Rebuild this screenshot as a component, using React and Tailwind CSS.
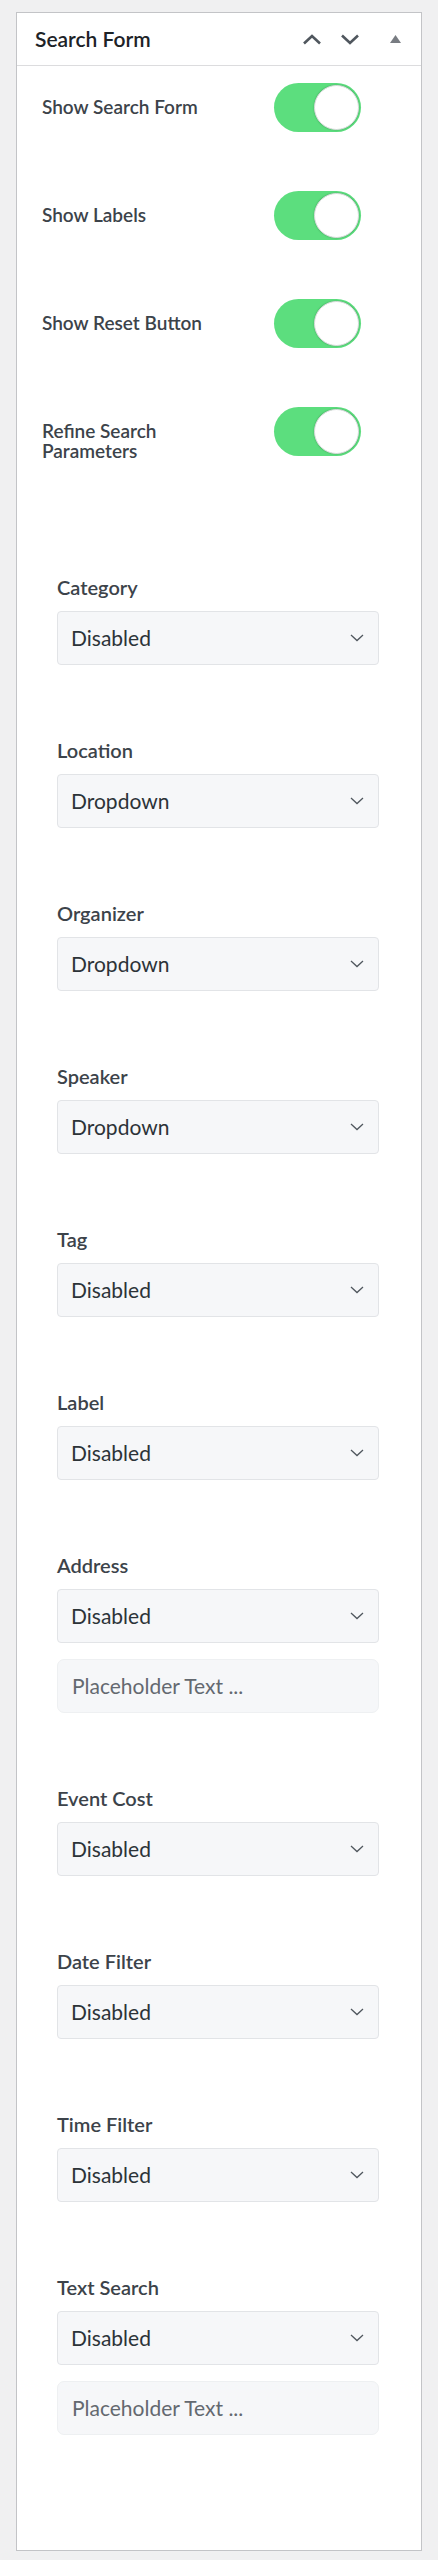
import React from 'react';

const font = { fontFamily: 'Lato, "Open Sans", "Liberation Sans", sans-serif' };

function Toggle() {
  return (
    <div className="relative w-[87px] h-[49px] rounded-full bg-[#5cde7e] shrink-0">
      <div className="absolute right-[2px] top-[2px] w-[45px] h-[45px] rounded-full bg-white border border-[#d9dcdc] shadow-[0_0_2px_rgba(0,0,0,0.25)]" />
    </div>
  );
}

function Chevron() {
  return (
    <svg width="14" height="8" viewBox="0 0 14 8" className="shrink-0">
      <path d="M1 1l6 5.5L13 1" fill="none" stroke="#50575e" strokeWidth="1.3" />
    </svg>
  );
}

function Field({ label, value, placeholder }) {
  return (
    <div className="flex flex-col">
      <div className="text-[20px] leading-[24px] font-semibold text-[#3c434a]">{label}</div>
      <div className="mt-[12px] h-[54px] w-[322px] flex items-center justify-between pl-[13px] pr-[14px] bg-[#f6f7f9] border border-[#e2e4e7] rounded-[4px]">
        <span className="text-[21px] text-[#2c3338]">{value}</span>
        <Chevron />
      </div>
      {placeholder && (
        <div className="mt-[16px] h-[54px] w-[322px] flex items-center pl-[14px] bg-[#f6f7f9] border border-[#eef0f2] rounded-[7px]">
          <span className="text-[21px] text-[#646970]">{placeholder}</span>
        </div>
      )}
    </div>
  );
}

const toggles = ['Show Search Form', 'Show Labels', 'Show Reset Button', 'Refine Search Parameters'];

const fields = [
  { label: 'Category', value: 'Disabled' },
  { label: 'Location', value: 'Dropdown' },
  { label: 'Organizer', value: 'Dropdown' },
  { label: 'Speaker', value: 'Dropdown' },
  { label: 'Tag', value: 'Disabled' },
  { label: 'Label', value: 'Disabled' },
  { label: 'Address', value: 'Disabled', placeholder: 'Placeholder Text ...' },
  { label: 'Event Cost', value: 'Disabled' },
  { label: 'Date Filter', value: 'Disabled' },
  { label: 'Time Filter', value: 'Disabled' },
  { label: 'Text Search', value: 'Disabled', placeholder: 'Placeholder Text ...' },
];

export default function App() {
  return (
    <div className="min-h-[2560px] bg-[#f0f0f1] pt-[12px]" style={font}>
      <div className="ml-[16px] w-[406px] bg-white border border-[#c3c4c7]">
        <div className="h-[53px] flex items-center pl-[18px] border-b border-[#dcdcde]">
          <div className="text-[21px] font-semibold text-[#1d2327]">Search Form</div>
          <div className="ml-auto flex items-center">
            <div className="w-[38px] flex justify-center">
              <svg width="20" height="11" viewBox="0 0 20 11">
                <path d="M2 9.5L10 2l8 7.5" fill="none" stroke="#50575e" strokeWidth="2.6" />
              </svg>
            </div>
            <div className="w-[38px] flex justify-center">
              <svg width="20" height="11" viewBox="0 0 20 11">
                <path d="M2 1.5L10 9l8-7.5" fill="none" stroke="#50575e" strokeWidth="2.6" />
              </svg>
            </div>
            <div className="w-[52px] flex justify-center">
              <svg width="11" height="8" viewBox="0 0 11 8">
                <path d="M5.5 0L11 8H0z" fill="#787c82" />
              </svg>
            </div>
          </div>
        </div>

        <div className="pt-[17px] pl-[25px] flex flex-col gap-[59px]">
          {toggles.map((t) => (
            <div key={t} className="flex items-start h-[49px]">
              <div className="w-[232px] pr-[50px] pt-[14px] text-[19px] leading-[20px] font-semibold text-[#3c434a]">{t}</div>
              <Toggle />
            </div>
          ))}
        </div>

        <div className="mt-[119px] pl-[40px] pb-[115px] flex flex-col gap-[73px]">
          {fields.map((f) => (
            <Field key={f.label} {...f} />
          ))}
        </div>
      </div>
    </div>
  );
}
